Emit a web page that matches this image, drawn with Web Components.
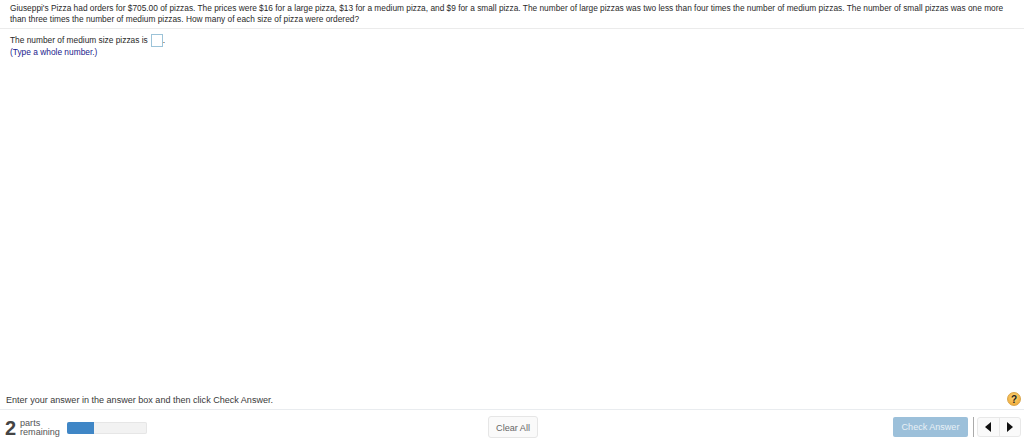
<!DOCTYPE html>
<html>
<head>
<meta charset="utf-8">
<style>
  html, body { margin: 0; height: 100%; background: #fff; overflow: hidden; }
  body { font-family: "Liberation Sans", Arial, sans-serif; }
</style>
</head>
<body>
<quiz-page>
  <quiz-question>
    <span slot="statement">Giuseppi's Pizza had orders for $705.00 of pizzas. The prices were $16 for a large pizza, $13 for a medium pizza, and $9 for a small pizza. The number of large pizzas was two less than four times the number of medium pizzas. The number of small pizzas was one more than three times the number of medium pizzas. How many of each size of pizza were ordered?</span>
    <span slot="prompt">The number of medium size pizzas is</span>
    <span slot="hint">(Type a whole number.)</span>
  </quiz-question>
  <quiz-footer></quiz-footer>
</quiz-page>

<script>
class QuizPage extends HTMLElement {
  constructor() {
    super();
    this.attachShadow({ mode: 'open' }).innerHTML = `
      <style>
        :host { display: flex; flex-direction: column; justify-content: space-between; height: 445px; }
      </style>
      <slot></slot>`;
  }
}

class QuizQuestion extends HTMLElement {
  constructor() {
    super();
    this.attachShadow({ mode: 'open' }).innerHTML = `
      <style>
        :host { display: block; font-size: 8.34px; color: #2a2a2a; }
        .statement { padding: 3px 10px; line-height: 11px; border-bottom: 1px solid #ebebeb; }
        .answer { padding: 3px 10px 0; }
        .row { display: flex; align-items: center; height: 16px; font-size: 8.35px; }
        .box { width: 10px; height: 11px; margin-left: 3px; border: 1px solid #9cc3d8; background: #fff; }
        .hint { color: #1a1a8c; font-size: 8.37px; line-height: 9px; }
      </style>
      <div class="statement"><slot name="statement"></slot></div>
      <div class="answer">
        <div class="row"><slot name="prompt"></slot><span class="box"></span><span>.</span></div>
        <div class="hint"><slot name="hint"></slot></div>
      </div>`;
  }
}

class QuizFooter extends HTMLElement {
  constructor() {
    super();
    this.attachShadow({ mode: 'open' }).innerHTML = `
      <style>
        :host { display: block; color: #3a3a3a; }
        .instruction { display: flex; align-items: center; justify-content: space-between; height: 20px; padding: 0 3px 0 6px; font-size: 9.05px; border-bottom: 1px solid #e9ecef; }
        .instruction .text { padding-top: 2px; }
        .help { width: 14px; height: 14px; border-radius: 50%; background: radial-gradient(circle at 50% 35%, #fbd678, #efa22c); border: 1px solid #d9a54a; box-sizing: border-box; display: flex; align-items: center; justify-content: center; font: bold 10px "Liberation Sans", sans-serif; color: #222; }
        .bar { display: grid; grid-template-columns: 1fr auto 1fr; align-items: start; height: 35px; padding: 6px 3px 0 5px; box-sizing: border-box; }
        .parts { display: flex; align-items: center; height: 24px; }
        .num { font: bold 20px/1 "Liberation Sans", sans-serif; color: #444; width: 15px; }
        .lbl { font-size: 9.1px; line-height: 9px; color: #555; width: 47px; }
        .progress { width: 80px; height: 12px; border-radius: 2px; background: #f2f2f2; box-shadow: inset 0 0 0 1px #e6e6e6; overflow: hidden; }
        .progress i { display: block; width: 27px; height: 100%; background: #3f86c6; }
        .clear { font-size: 9.1px; color: #666; padding: 2px 7px 0; height: 18px; line-height: 19px; border: 1px solid #e6e6e6; border-radius: 3px; background: #fafafa; }
        .actions { display: flex; align-items: center; justify-content: flex-end; margin-top: 1px; }
        .check { font-size: 9.05px; color: #e8f0f6; background: #9cc0da; border-radius: 2px; width: 75px; height: 20px; line-height: 20px; text-align: center; }
        .sep { width: 1px; height: 20px; background: #aaa; margin: 0 3px 0 5px; }
        .nav { display: flex; width: 44px; height: 20px; border: 1px solid #e8e8e8; border-radius: 3px; box-sizing: border-box; background: #fafafa; }
        .nav span { flex: 1; display: flex; align-items: center; justify-content: center; }
        .nav span + span { border-left: 1px solid #e8e8e8; }
        svg { display: block; }
      </style>
      <div class="instruction"><span class="text">Enter your answer in the answer box and then click Check Answer.</span><span class="help">?</span></div>
      <div class="bar">
        <div class="parts">
          <span class="num">2</span><span class="lbl">parts remaining</span>
          <div class="progress"><i></i></div>
        </div>
        <div class="clear">Clear All</div>
        <div class="actions">
          <div class="check">Check Answer</div>
          <span class="sep"></span>
          <div class="nav">
            <span><svg width="6" height="10" viewBox="0 0 6 10"><path d="M6 0v10L0 5z" fill="#111"/></svg></span>
            <span><svg width="6" height="10" viewBox="0 0 6 10"><path d="M0 0v10l6-5z" fill="#111"/></svg></span>
          </div>
        </div>
      </div>`;
  }
}

customElements.define('quiz-page', QuizPage);
customElements.define('quiz-question', QuizQuestion);
customElements.define('quiz-footer', QuizFooter);
</script>
</body>
</html>
